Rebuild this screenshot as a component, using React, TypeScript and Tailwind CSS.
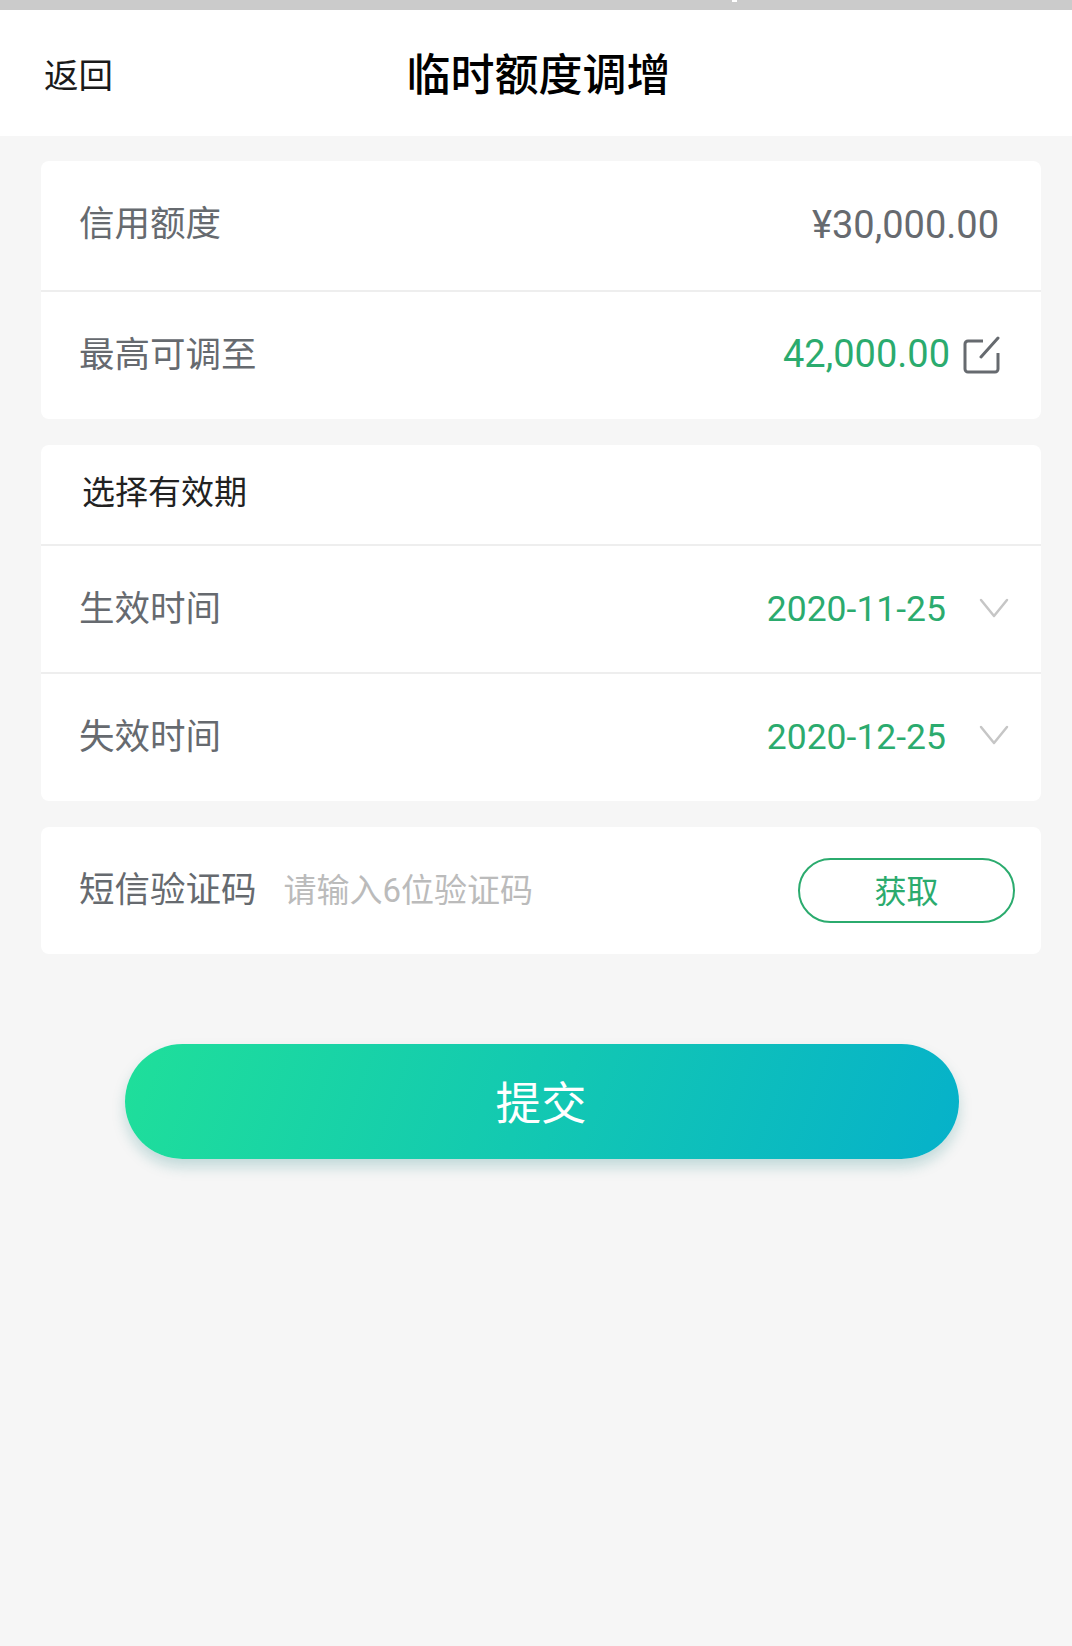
const cjk = "font-['Roboto','Noto_Sans_CJK_SC',sans-serif]";

function Divider() {
  return <div className="h-[2px] bg-[#eeeeee]" />;
}

function EditIcon() {
  return (
    <svg width="37" height="38" viewBox="0 0 37 38" fill="none" stroke="#666a6f" strokeWidth="3" className="mb-[2px] ml-[13px] shrink-0">
      <path d="M20 5H5a3 3 0 0 0-3 3v25a3 3 0 0 0 3 3h27a3 3 0 0 0 3-3V17" />
      <path d="M18 21 35 2" strokeLinecap="round" />
    </svg>
  );
}

function Chevron() {
  return (
    <svg width="30" height="21" viewBox="0 0 30 21" fill="none" stroke="#c6c6c6" strokeWidth="2.5" strokeLinecap="round" strokeLinejoin="round" className="mb-[4px] ml-[33px] shrink-0">
      <path d="M2 2 15 18 28 2" />
    </svg>
  );
}

function DateRow({ label, value, className }: { label: string; value: string; className: string }) {
  return (
    <div className={`flex items-center justify-between pl-[38px] pr-[32px] ${className}`}>
      <span className="text-[35.5px] text-[#666a6f]">{label}</span>
      <div className="flex items-center">
        <span className="text-[35.5px] text-[#2bab6e]">{value}</span>
        <Chevron />
      </div>
    </div>
  );
}

export default function App() {
  return (
    <div className={`relative flex h-[1646px] w-[1072px] flex-col overflow-hidden bg-[#f6f6f6] ${cjk}`}>
      {/* status bar leftover */}
      <div className="relative h-[10px] bg-[#cbcbcb]">
        <div className="absolute left-[732px] top-0 h-[2px] w-[5px] bg-white" />
      </div>
      <header className="relative flex h-[126px] items-center justify-center bg-white">
        <span className="absolute left-[44px] top-[41px] text-[34.5px] text-[#1a1a1a]">返回</span>
        <h1 className="ml-[5px] mt-[6px] text-[44px] font-medium text-black">临时额度调增</h1>
      </header>

      <main className="flex flex-col pl-[41px] pr-[31px] pt-[25px]">
        <section className="rounded-[8px] bg-white">
          <div className="flex h-[129px] items-center justify-between pl-[38px] pr-[42px]">
            <span className="mb-[1px] text-[35.5px] text-[#666a6f]">信用额度</span>
            <span className="text-[38px] text-[#666a6f]">¥30,000.00</span>
          </div>
          <Divider />
          <div className="flex h-[127px] items-center justify-between pl-[38px] pr-[41px]">
            <span className="text-[35.5px] text-[#666a6f]">最高可调至</span>
            <div className="flex items-center">
              <span className="mb-[3px] text-[38px] text-[#2bab6e]">42,000.00</span>
              <EditIcon />
            </div>
          </div>
        </section>

        <section className="mt-[26px] rounded-[8px] bg-white">
          <div className="flex h-[99px] items-center pb-[3px] pl-[41px] text-[33px] text-[#222222]">选择有效期</div>
          <Divider />
          <DateRow label="生效时间" value="2020-11-25" className="h-[126px] pt-[2px]" />
          <Divider />
          <DateRow label="失效时间" value="2020-12-25" className="h-[127px]" />
        </section>

        <section className="mt-[26px] flex h-[127px] items-center rounded-[8px] bg-white pl-[38px] pr-[26px]">
          <span className="text-[35.5px] text-[#666a6f]">短信验证码</span>
          <span className="ml-[27px] text-[33px] text-[#bbbbbb]">请输入6位验证码</span>
          <button
            type="button"
            className="ml-auto h-[65px] w-[217px] rounded-full border-[2.5px] border-[#2bab6e] pt-[3px] text-[32px] text-[#2bab6e]"
          >
            获取
          </button>
        </section>

        <button
          type="button"
          className="ml-[84px] mr-[82px] mt-[90px] h-[115px] rounded-full bg-[linear-gradient(110deg,#1fdf9a,#06b1ca)] pr-[2px] pt-[8px] text-[45.5px] text-white shadow-[0_8px_14px_rgba(10,120,120,0.22)]"
        >
          提交
        </button>
      </main>
    </div>
  );
}
